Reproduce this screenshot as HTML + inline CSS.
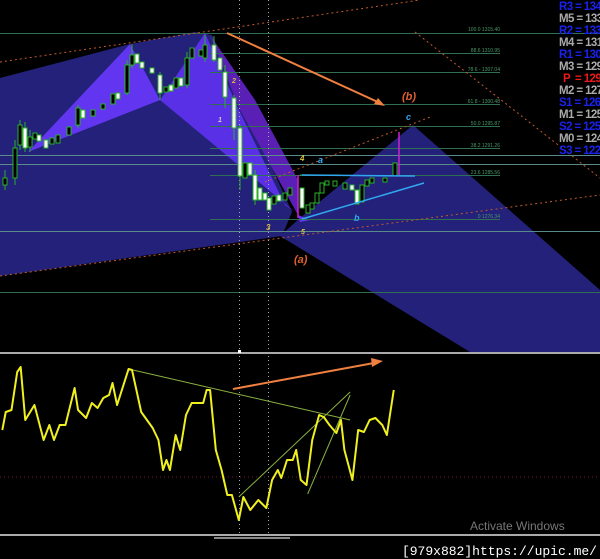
<!DOCTYPE html>
<html><head><meta charset="utf-8"><style>
html,body{margin:0;padding:0;background:#000;}
svg{display:block}
</style></head><body>
<svg width="600" height="559" viewBox="0 0 600 559" xmlns="http://www.w3.org/2000/svg" font-family="Liberation Sans, sans-serif">
<rect width="600" height="559" fill="#000"/>
<polygon points="0,78 130,44 195,32 212,35 292,212 282,236 0,276" fill="#23217a"/>
<polygon points="413,125 600,290 600,352 470,352 280,236 300,218" fill="#23217a"/>
<polygon points="28,152 130,44 160,100" fill="#6236f0"/>
<polygon points="160,100 205,33 238,108 285,205 295,212" fill="#5a30e6"/>
<polygon points="210,35 240,110 298,215 298,180 255,100" fill="#5a1fb5"/>
<polygon points="298,215 300,222 310,220" fill="#6236f0"/>
<line x1="0" y1="33.5" x2="600" y2="33.5" stroke="#2f6e50"/>
<g stroke="#2f6e50">
<line x1="210" y1="53.5" x2="500" y2="53.5"/>
<line x1="210" y1="72.5" x2="500" y2="72.5"/>
<line x1="210" y1="104.5" x2="500" y2="104.5"/>
<line x1="210" y1="126.5" x2="500" y2="126.5"/>
<line x1="210" y1="148.5" x2="500" y2="148.5"/>
<line x1="210" y1="175.5" x2="500" y2="175.5"/>
<line x1="210" y1="219.5" x2="500" y2="219.5"/>
<line x1="0" y1="292.5" x2="600" y2="292.5"/>
</g>
<g stroke="#5a8a8a">
<line x1="0" y1="155.5" x2="600" y2="155.5"/>
<line x1="0" y1="164.5" x2="600" y2="164.5"/>
<line x1="0" y1="231.5" x2="600" y2="231.5"/>
</g>
<g font-size="5" fill="#4a9a6a" text-anchor="end">
<text x="500" y="31">100.0 1315.40</text>
<text x="500" y="52">88.6 1310.95</text>
<text x="500" y="71">78.6 - 1307.04</text>
<text x="500" y="103">61.8 - 1300.48</text>
<text x="500" y="125">50.0 1295.87</text>
<text x="500" y="147">38.2 1291.26</text>
<text x="500" y="174">23.6 1285.56</text>
<text x="500" y="218">0 1276.34</text>
</g>
<g stroke="#c05a2a" stroke-dasharray="2,3" fill="none">
<line x1="0" y1="62" x2="420" y2="0"/>
<line x1="0" y1="276" x2="600" y2="195"/>
<line x1="265" y1="182" x2="430" y2="117"/>
<line x1="415" y1="32" x2="600" y2="178"/>
</g>
<g stroke="#aaa" stroke-dasharray="1,3">
<line x1="239.5" y1="0" x2="239.5" y2="535"/>
<line x1="268.5" y1="0" x2="268.5" y2="535"/>
</g>
<line x1="0" y1="477" x2="600" y2="477" stroke="#6a1a2a" stroke-dasharray="1,3"/>
<g stroke="#2ab02a" stroke-width="1">
<line x1="5" y1="170" x2="5" y2="190"/><rect x="3" y="178" width="4" height="7" fill="#000"/>
<line x1="15" y1="140" x2="15" y2="185"/><rect x="13" y="148" width="4" height="30" fill="#000"/>
<line x1="20" y1="120" x2="20" y2="150"/><rect x="18" y="125" width="4" height="20" fill="#000"/>
<line x1="25" y1="122" x2="25" y2="152"/><rect x="23" y="128" width="4" height="20" fill="#fff"/>
<line x1="30" y1="130" x2="30" y2="152"/><rect x="28" y="137" width="4" height="10" fill="#000"/>
<rect x="33" y="133" width="4" height="6" fill="#000"/>
<rect x="37" y="135" width="4" height="6" fill="#fff"/>
<rect x="44" y="140" width="4" height="8" fill="#fff"/>
<rect x="50" y="138" width="4" height="6" fill="#000"/>
<rect x="56" y="135" width="4" height="8" fill="#000"/>
<rect x="67" y="127" width="4" height="8" fill="#000"/>
<line x1="78" y1="105" x2="78" y2="128"/><rect x="76" y="108" width="4" height="17" fill="#000"/>
<rect x="81" y="110" width="4" height="8" fill="#fff"/>
<rect x="91" y="110" width="4" height="6" fill="#000"/>
<rect x="101" y="104" width="4" height="5" fill="#000"/>
<rect x="111" y="94" width="4" height="10" fill="#000"/>
<rect x="116" y="93" width="4" height="6" fill="#fff"/>
<line x1="127" y1="60" x2="127" y2="95"/><rect x="125" y="65" width="4" height="28" fill="#000"/>
<line x1="132" y1="44" x2="132" y2="68"/><rect x="130" y="55" width="4" height="10" fill="#000"/>
<rect x="135" y="54" width="4" height="9" fill="#fff"/>
<rect x="140" y="62" width="4" height="6" fill="#fff"/>
<rect x="150" y="68" width="4" height="5" fill="#fff"/>
<line x1="160" y1="72" x2="160" y2="100"/><rect x="158" y="75" width="4" height="18" fill="#fff"/>
<rect x="164" y="87" width="4" height="5" fill="#000"/>
<rect x="169" y="85" width="4" height="6" fill="#fff"/>
<rect x="174" y="78" width="4" height="10" fill="#000"/>
<rect x="179" y="78" width="4" height="8" fill="#fff"/>
<line x1="187" y1="52" x2="187" y2="88"/><rect x="185" y="58" width="4" height="27" fill="#000"/>
<rect x="190" y="48" width="4" height="10" fill="#000"/>
<rect x="199" y="50" width="4" height="6" fill="#000"/>
<line x1="205" y1="35" x2="205" y2="62"/><rect x="203" y="45" width="4" height="13" fill="#000"/>
<line x1="214" y1="36" x2="214" y2="62"/><rect x="212" y="45" width="4" height="15" fill="#fff"/>
<rect x="218" y="58" width="4" height="12" fill="#fff"/>
<line x1="225" y1="65" x2="225" y2="108"/><rect x="223" y="72" width="4" height="25" fill="#fff"/>
<line x1="234" y1="95" x2="234" y2="140"/><rect x="232" y="98" width="4" height="30" fill="#fff"/>
<line x1="240" y1="125" x2="240" y2="190"/><rect x="238" y="128" width="4" height="48" fill="#fff"/>
<rect x="243" y="163" width="4" height="15" fill="#000"/>
<rect x="248" y="163" width="4" height="12" fill="#fff"/>
<line x1="255" y1="170" x2="255" y2="205"/><rect x="253" y="175" width="4" height="25" fill="#fff"/>
<rect x="258" y="188" width="4" height="12" fill="#fff"/>
<rect x="263" y="193" width="4" height="7" fill="#fff"/>
<rect x="267" y="198" width="4" height="12" fill="#fff"/>
<rect x="272" y="196" width="4" height="8" fill="#000"/>
<rect x="277" y="195" width="4" height="6" fill="#fff"/>
<rect x="283" y="193" width="4" height="7" fill="#000"/>
<rect x="288" y="188" width="4" height="7" fill="#000"/>
<rect x="300" y="188" width="4" height="20" fill="#fff"/>
<rect x="306" y="205" width="4" height="8" fill="#000"/>
<rect x="310" y="203" width="4" height="6" fill="#000"/>
<rect x="315" y="193" width="4" height="10" fill="#000"/>
<rect x="320" y="183" width="4" height="10" fill="#000"/>
<rect x="325" y="181" width="4" height="4" fill="#000"/>
<rect x="333" y="181" width="4" height="5" fill="#000"/>
<rect x="343" y="183" width="4" height="6" fill="#000"/>
<rect x="350" y="185" width="4" height="5" fill="#fff"/>
<rect x="355" y="190" width="4" height="14" fill="#fff"/>
<rect x="360" y="185" width="4" height="17" fill="#000"/>
<rect x="365" y="180" width="4" height="6" fill="#000"/>
<rect x="370" y="178" width="4" height="5" fill="#000"/>
<rect x="383" y="178" width="4" height="4" fill="#000"/>
<rect x="393" y="163" width="4" height="13" fill="#000"/>
</g>
<g stroke="#d020d0" stroke-width="1.5">
<line x1="298" y1="175" x2="298" y2="218"/>
<line x1="399" y1="132" x2="399" y2="175"/>
</g>
<line x1="300" y1="175" x2="340" y2="175" stroke="#2ab02a"/>
<g stroke="#30a8f0" stroke-width="1.5">
<line x1="302" y1="175" x2="415" y2="176"/>
<line x1="302" y1="219" x2="424" y2="183"/>
</g>
<g font-style="italic" font-weight="bold" font-size="9">
<text x="232" y="83" fill="#d8c040" font-size="7">2</text>
<text x="218" y="122" fill="#ccc" font-size="7">1</text>
<text x="300" y="161" fill="#d8c040" font-size="8">4</text>
<text x="318" y="163" fill="#30a8f0">a</text>
<text x="266" y="230" fill="#d8c040" font-size="8">3</text>
<text x="301" y="234" fill="#d8c040" font-size="7">5</text>
<text x="354" y="221" fill="#30a8f0">b</text>
<text x="406" y="120" fill="#30a8f0">c</text>
<text x="402" y="100" fill="#e06030" font-size="11">(b)</text>
<text x="294" y="263" fill="#e06030" font-size="11">(a)</text>
</g>
<g stroke="#f08040" stroke-width="2" fill="#f08040">
<line x1="227" y1="33" x2="380" y2="103"/>
<polygon points="385,106 374,104 378,98" stroke="none"/>
<line x1="233" y1="389" x2="374" y2="363"/>
<polygon points="383,361 372,367 371,358" stroke="none"/>
</g>
<g font-size="11.5" font-weight="bold" letter-spacing="-0.6">
<text x="559" y="10" fill="#1a22ee">R3 = 134</text>
<text x="559" y="22" fill="#aaa">M5 = 133</text>
<text x="559" y="34" fill="#1a22ee">R2 = 133</text>
<text x="559" y="46" fill="#aaa">M4 = 131</text>
<text x="559" y="58" fill="#1a22ee">R1 = 130</text>
<text x="559" y="70" fill="#aaa">M3 = 129</text>
<text x="563" y="82" fill="#ee1a1a">P &#160;= 129</text>
<text x="559" y="94" fill="#aaa">M2 = 127</text>
<text x="559" y="106" fill="#1a22ee">S1 = 126</text>
<text x="559" y="118" fill="#aaa">M1 = 125</text>
<text x="559" y="130" fill="#1a22ee">S2 = 125</text>
<text x="559" y="142" fill="#aaa">M0 = 124</text>
<text x="559" y="154" fill="#1a22ee">S3 = 122</text>
</g>
<rect x="0" y="352" width="600" height="2" fill="#aaa"/>
<rect x="238" y="350" width="3" height="3" fill="#fff"/>
<g transform="matrix(1.148,0,0,1,0,0)">
<g stroke="#8ab040" stroke-width="1" fill="none">
<line x1="112" y1="369" x2="305" y2="420" vector-effect="non-scaling-stroke"/>
<line x1="208" y1="497" x2="305" y2="392" vector-effect="non-scaling-stroke"/>
<line x1="268" y1="494" x2="305" y2="395" vector-effect="non-scaling-stroke"/>
</g>
<polyline fill="none" stroke="#f0f020" stroke-width="2" stroke-linejoin="round" vector-effect="non-scaling-stroke" points="2,430 5,412 10,410 15,372 18,367 22,420 30,405 38,440 43,425 47,440 52,425 57,425 65,388 68,410 75,418 80,403 85,408 90,398 95,395 98,383 102,405 112,369 115,370 123,412 133,428 138,440 142,470 145,460 148,470 153,435 157,450 162,415 167,403 172,403 177,403 180,390 183,390 188,450 193,470 198,495 202,495 208,520 212,497 218,510 225,500 232,508 237,480 242,470 245,478 250,460 255,460 258,450 262,480 267,485 272,440 278,415 282,417 287,425 293,433 297,420 300,450 307,480 312,430 317,432 322,420 327,418 333,425 337,435 343,390"/>
</g>
<rect x="0" y="534" width="600" height="2" fill="#aaa"/>
<rect x="214" y="537" width="76" height="2" fill="#888"/>
<text x="470" y="530" font-size="12" fill="#777">Activate Windows</text>
<text x="597" y="555" font-size="13" fill="#fff" text-anchor="end" font-family="Liberation Mono, monospace">[979x882]https://upic.me/</text>
</svg>
</body></html>
